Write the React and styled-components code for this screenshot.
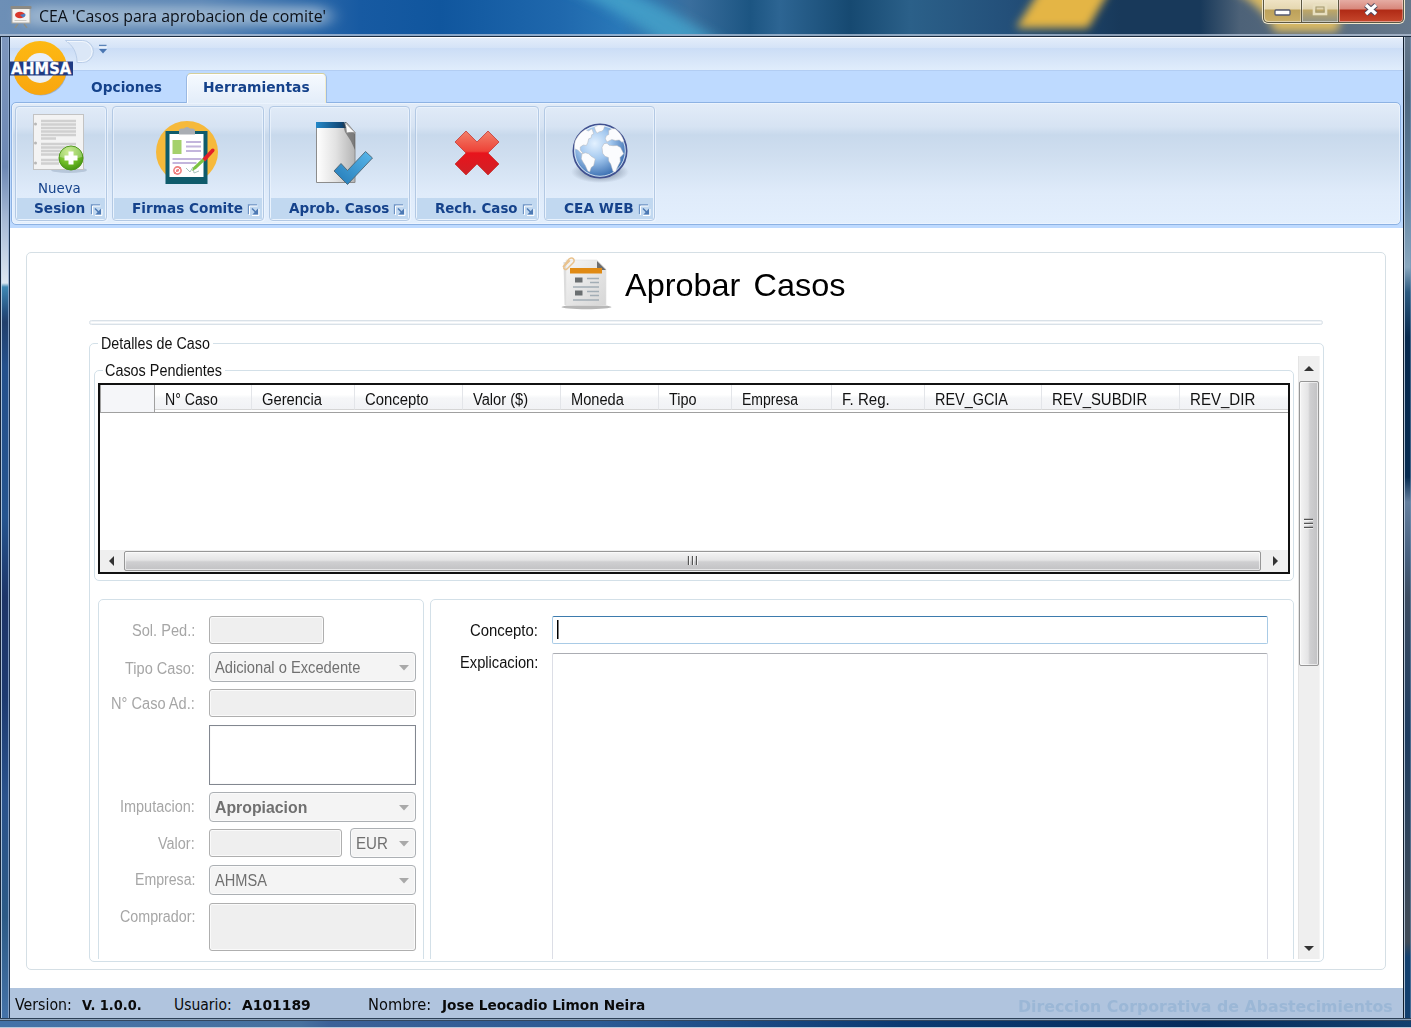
import React, { useLayoutEffect, useRef, useState } from 'react';
import styled, { createGlobalStyle, css } from 'styled-components';

const SANS = '"Liberation Sans", Arial, sans-serif';
const TAHOMA = '"DejaVu Sans Condensed", Tahoma, sans-serif';
const VERDANA = '"DejaVu Sans", Verdana, sans-serif';

const Global = createGlobalStyle`
  * { box-sizing: border-box; }
  body { margin: 0; background: #1b3d66; font-family: ${SANS}; color: #111; }
`;

/* ---------- text fitted to a column width ---------- */
const FitBox = styled.span`
  display: inline-block;
  flex: none;
  width: ${p => p.$w}px;
  height: ${p => p.$lh}px;
  white-space: nowrap;
  text-align: left;
  line-height: ${p => p.$lh + 2 * p.$dy}px;
  font-family: ${p => p.$font};
  font-size: ${p => p.$size}px;
  font-weight: ${p => (p.$bold ? 700 : 400)};
  word-spacing: ${p => p.$ws}px;
  color: ${p => p.$color};
`;
const FitInner = styled.span`
  display: inline-block;
  transform-origin: left center;
`;
function Txt({ w, size = 16, lh = 18, dy = 1, ws = 0, font = SANS, bold, color = 'inherit', children }) {
  const ref = useRef(null);
  const [k, setK] = useState(1);
  useLayoutEffect(() => {
    setK(w / ref.current.offsetWidth);
  }, [w]);
  return (
    <FitBox $w={w} $lh={lh} $dy={dy} $ws={ws} $size={size} $font={font} $bold={bold} $color={color}>
      <FitInner ref={ref} style={{ transform: `scaleX(${k})` }}>{children}</FitInner>
    </FitBox>
  );
}

/* ---------- window frame ---------- */
const Desktop = styled.div`
  width: 1411px;
  height: 1028px;
  overflow: hidden;
  display: grid;
  grid-template-columns: 10px 1393px 8px;
  grid-template-rows: 37px 981px 10px;
`;
const TitleBar = styled.header`
  grid-column: 1 / 4;
  position: relative;
  overflow: hidden;
  display: flex;
  justify-content: space-between;
  align-items: flex-start;
  border-bottom: 1px solid #1c2c40;
  box-shadow: inset 0 -2px 0 rgba(180, 195, 215, 0.75);
  background: linear-gradient(90deg, #6d8fb6 0, #5b86b5 200px, #175aa2 360px, #10569e 440px, #1f68ad 560px, #2a78b8 620px, #3a6e9d 690px, #1c5582 750px, #2d6593 780px, #164971 850px, #2b6089 910px, #234f79 1010px, #18395a 1120px, #18395a 1200px, #4d6278 1240px, #65778a 1411px);
`;
const Wallpaper = styled.svg`
  position: absolute;
  left: 0;
  top: 0;
`;
const Caption = styled.div`
  position: relative;
  display: flex;
  align-items: center;
  gap: 7px;
  padding: 3px 0 0 10px;
  height: 29px;
`;
const CaptionText = styled.div`
  padding-top: 1px;
  height: 24px;
`;
const Buttons = styled.div`
  position: relative;
  display: flex;
  width: 143px;
  height: 24px;
  margin-right: 6px;
  border: 1px solid #efe7cd;
  border-top: 0;
  border-radius: 0 0 6px 6px;
  overflow: hidden;
`;
const WinButton = styled.div`
  width: ${p => p.$w}px;
  display: flex;
  justify-content: center;
  padding-top: ${p => p.$pt || 0}px;
  border: 1px solid #5c5742;
  border-top: 0;
  border-left-width: ${p => (p.$first ? 1 : 0)}px;
  box-shadow: inset 1px -1px 0 rgba(255, 255, 255, 0.45), inset -1px 0 0 rgba(255, 255, 255, 0.35);
  border-radius: ${p => (p.$first ? '0 0 0 5px' : p.$last ? '0 0 5px 0' : 0)};
  background: ${p => p.$bg};
`;
const Edge = styled.div`
  background: ${p => p.$bg};
  ${p => p.$side === 'left' && css`
    border-left: 1px solid #16243a;
    border-right: 1px solid #1d3350;
    box-shadow: inset 1px 0 0 rgba(200, 220, 240, 0.8), inset -1px 0 0 rgba(150, 175, 210, 0.8);
  `}
  ${p => p.$side === 'right' && css`
    border-left: 1px solid #111d2c;
    box-shadow: inset 1px 0 0 rgba(190, 205, 222, 0.9), inset -1px 0 0 rgba(120, 150, 185, 0.5);
  `}
  ${p => p.$side === 'bottom' && css`
    grid-column: 1 / 4;
    border-top: 1px solid #2b3f56;
    border-bottom: 1px solid #b8c9dc;
    box-shadow: inset 0 1px 0 #8fa5bd, inset 0 2px 0 #33475f;
  `}
`;
const Client = styled.div`
  display: flex;
  flex-direction: column;
  background: #fff;
  overflow: hidden;
  position: relative;
`;

/* ---------- ribbon ---------- */
const QuickBar = styled.div`
  flex: none;
  height: 34px;
  border-top: 1px solid #fff;
  border-bottom: 1px solid #b2cdf3;
  background: linear-gradient(#e3edfa 0, #d4e3f7 10px, #cbddf6 10px, #d5e4f8 20px, #e0edfc 32px);
  display: flex;
  padding: 1px 0 0 53px;
`;
const TabRow = styled.nav`
  flex: none;
  height: 31px;
  background: #bedaff;
  display: flex;
  align-items: flex-end;
  padding-left: 57px;
`;
const Tab = styled.div`
  width: ${p => p.$w}px;
  height: 30px;
  padding: ${p => (p.$active ? 4 : 6)}px 0 0 ${p => p.$pl}px;
  position: relative;
  z-index: 1;
  ${p => p.$active && css`
    margin-bottom: -1px;
    border: 1px solid #9bb9e2;
    border-top-color: #d4cf9c;
    border-bottom: 0;
    border-radius: 5px 5px 0 0;
    background: linear-gradient(#f6faff, #e3edf9);
    box-shadow: inset 1px 1px 0 #fff, inset -1px 0 0 #f2eccb;
  `}
`;
const Ribbon = styled.div`
  flex: none;
  height: 123px;
  margin: 0 2px 0 1px;
  padding: 3px;
  display: flex;
  gap: 5px;
  border: 1px solid #8db2e3;
  border-radius: 5px;
  box-shadow: inset 0 0 0 1px rgba(240, 247, 255, 0.7), 0 1px 0 2px #bedaff;
  background: linear-gradient(#e2ecf8 0, #d6e3f3 24px, #c8d9ec 32px, #d0dff0 55px, #dfebfa 90px, #e3effd 122px);
`;
const RibbonBack = styled.div`
  flex: none;
  background: #bedaff;
  height: 126px;
`;
const Group = styled.section`
  width: ${p => p.$w}px;
  height: 115px;
  border: 1px solid #b3c9e4;
  border-radius: 4px;
  box-shadow: inset 0 0 0 1px rgba(236, 244, 254, 0.75), 1px 1px 0 rgba(240, 247, 255, 0.7);
  display: flex;
  flex-direction: column;
`;
const GroupBody = styled.div`
  height: 91px;
  display: flex;
  flex-direction: column;
  align-items: center;
  justify-content: center;
  gap: 4px;
  padding-top: ${p => p.$top || 0}px;
  padding-left: ${p => Math.max(0, p.$shift || 0)}px;
  padding-right: ${p => Math.max(0, -(p.$shift || 0))}px;
`;
const GroupLabel = styled.div`
  flex: 1;
  margin: 0 1px 1px;
  padding: 0 2px 1px ${p => p.$pl || 18}px;
  display: flex;
  align-items: center;
  justify-content: space-between;
  background: #c1d8f0;

  svg { position: relative; top: 1px; }
`;

/* ---------- document ---------- */
const Page = styled.main`
  flex: 1;
  padding: 24px 0 0 16px;
`;
const Sheet = styled.div`
  width: 1360px;
  height: 718px;
  border: 1px solid #d5dfe5;
  border-radius: 5px;
  padding-left: 62px;
`;
const Heading = styled.h1`
  margin: 0;
  font-weight: 400;
  color: #000;
  height: 67px;
  padding: 4px 0 9px 472px;
  display: flex;
  align-items: center;
  gap: 13px;
`;
const Rule = styled.div`
  width: 1234px;
  height: 5px;
  border: 1px solid #d9e1e8;
  border-radius: 3px;
  box-shadow: inset 0 0 0 1px #f0f3f6;
`;
const Frame = styled.fieldset`
  margin: ${p => p.$mt || 0}px 0 0;
  padding: ${p => p.$pad};
  width: ${p => p.$w}px;
  height: ${p => p.$h}px;
  min-width: 0;
  flex: none;
  border: 1px solid #d3e0e8;
  border-radius: 5px;
`;
const Legend = styled.legend`
  margin-left: ${p => p.$ml}px;
  padding: 0 3px 0 ${p => p.$pl}px;
  height: 18px;
`;
const Scroller = styled.div`
  height: 603px;
  display: flex;
  gap: 4px;
  overflow: hidden;
`;
const Column = styled.div`
  width: 1200px;
  flex: none;
  padding-top: 5px;
  overflow: hidden;
`;
const Grid = styled.div`
  width: 1192px;
  height: 191px;
  border: 2px solid #111;
  display: flex;
  flex-direction: column;
  justify-content: space-between;
`;
const HeadRow = styled.div`
  height: 28px;
  display: flex;
  border-bottom: 1px solid #a0a0a0;
`;
const HeadCell = styled.div`
  width: ${p => p.$w}px;
  flex: ${p => (p.$last ? 1 : 'none')};
  height: 25px;
  padding: 5px 0 0 10px;
  background: linear-gradient(#fff 40%, #f5f6f8 55%, #f1f2f5);
  border-bottom: 1px solid #d5d5d5;
  border-right: ${p => (p.$last ? 0 : 1)}px solid #e3e5e9;
`;
const Corner = styled.div`
  width: 55px;
  height: 27px;
  flex: none;
  background: #f5f6f9;
  border-right: 1px solid #a0a0a0;
  border-left: 1px solid #a0a0a0;
`;
const HBar = styled.div`
  height: 22px;
  display: flex;
  align-items: center;
  background: #efefef;
`;
const VBar = styled.div`
  width: 22px;
  flex: none;
  display: flex;
  flex-direction: column;
  align-items: center;
  background: #efefef;
  border-left: 1px solid #e4e4e4;
  border-right: 1px solid #f5f5f5;
`;
const Arrow = styled.div`
  flex: none;
  width: ${p => p.$w}px;
  height: ${p => p.$h}px;
  display: flex;
  align-items: center;
  justify-content: center;
`;
const Thumb = styled.div`
  flex: none;
  display: flex;
  align-items: center;
  justify-content: center;
  border: 1px solid #979797;
  border-radius: 2px;
  box-shadow: inset 0 0 0 1px rgba(255, 255, 255, 0.6);
  ${p => p.$vertical
    ? css`width: 20px; height: 285px; background: linear-gradient(90deg, #f4f4f4, #e4e4e5 45%, #cfcfd1 55%, #c2c2c4);`
    : css`width: 1137px; height: 20px; background: linear-gradient(#f4f4f4, #e4e4e5 45%, #cfcfd1 55%, #c2c2c4);`}
`;
const Panels = styled.div`
  display: flex;
  gap: 6px;
  padding-left: 4px;
  margin-top: 18px;
`;
const Panel = styled.div`
  flex: none;
  width: ${p => p.$w}px;
  height: 390px;
  border: 1px solid #d3e0e8;
  border-radius: 5px;
`;

/* ---------- form ---------- */
const Row = styled.div`
  display: flex;
  margin-top: ${p => p.$mt}px;
  height: ${p => p.$h}px;
`;
const Label = styled.label`
  flex: none;
  width: ${p => p.$w}px;
  margin-right: 14px;
  padding-top: ${p => p.$pt}px;
  text-align: right;
  color: ${p => (p.$active ? '#111' : '#a6a6a6')};
`;
const Field = styled.div`
  flex: none;
  width: ${p => p.$w || 207}px;
  height: ${p => (p.$h ? `${p.$h}px` : '100%')};
  align-self: center;
  border: 1px solid #afafaf;
  border-radius: 3px;
  background: #efefef;
  box-shadow: inset 0 0 0 1px #fafafa;
`;
const Box = styled(Field)`
  border: 1px solid #828790;
  border-radius: 0;
  background: #fff;
`;
const Combo = styled(Field)`
  height: 30px;
  display: flex;
  align-items: center;
  justify-content: space-between;
  padding: 0 5px 0 5px;
  border-color: #acb0b4;
  border-radius: 4px;
  background: #f4f4f4;
  color: #707070;
`;
const Entry = styled.div`
  flex: none;
  width: 716px;
  height: 100%;
  padding: 3px;
  background: #fff;
  border: 1px solid ${p => (p.$focus ? '#a9cbe6' : '#dcdee6')};
  border-top-color: ${p => (p.$focus ? '#3d7bad' : '#abadb3')};
  border-radius: 2px;
`;
const Caret = styled.div`
  width: 1px;
  height: 19px;
  margin-left: 1px;
  background: #000;
  box-shadow: 0.5px 0 0 #000;
`;

/* ---------- status bar ---------- */
const Status = styled.footer`
  flex: none;
  height: 30px;
  padding: 2px 10px 0 5px;
  display: flex;
  align-items: center;
  background: #b0c4de;
  color: #0a0a0a;
`;
const Gap = styled.div`
  flex: ${p => (p.$w ? 'none' : 1)};
  width: ${p => p.$w || 0}px;
`;
const Watermark = styled.div`
  padding-top: 4px;
`;

const Logo = styled.svg`
  position: absolute;
  left: -1px;
  top: 2px;
  z-index: 2;
`;

/* ---------- drawings ---------- */
const AppIcon = () => (
  <svg width="22" height="24" viewBox="0 0 22 24">
    <path d="M8 20l-3 4M14 20l3 4" stroke="#8d8f86" strokeWidth="1.4" />
    <rect x="2" y="4" width="18" height="15" fill="#f5f3f0" stroke="#a9a7a0" />
    <rect x="0.500" y="2" width="21" height="3" rx="1" fill="#8c8a84" />
    <ellipse cx="10" cy="11" rx="5" ry="3.200" fill="#d9382c" />
    <path d="M10 11l5-1.500a5 3.200 0 0 1-2 4z" fill="#4d7fc2" />
    <path d="M4.500 16.500h12" stroke="#c9c7c2" />
  </svg>
);
const AhmsaLogo = () => (
  <Logo width="68" height="62" viewBox="0 0 68 62">
    <defs>
      <linearGradient id="ring" x1="0" y1="0" x2="0" y2="1"><stop offset="0" stopColor="#fdb913" /><stop offset="1" stopColor="#f9a60f" /></linearGradient>
    </defs>
    <circle cx="32" cy="30.500" r="26" fill="rgba(70,80,100,.3)" />
    <circle cx="31" cy="29" r="27" fill="url(#ring)" />
    <circle cx="31" cy="29" r="15" fill="#e9eff8" />
    <rect x="1" y="22.500" width="63" height="14" fill="#1f3b83" />
    <text x="2" y="35" textLength="60" lengthAdjust="spacingAndGlyphs" fontFamily="DejaVu Sans" fontWeight="700" fontSize="15" fill="#fff" stroke="#fff" strokeWidth=".3">AHMSA</text>
  </Logo>
);
const QuickEnd = () => (
  <svg width="46" height="28" viewBox="0 0 46 28">
    <path d="M2.500 1.500h17a11 11 0 0 1 0 22h-5.500c0-10-4-17-11.500-22z" fill="#dbe7f7" stroke="#b9cde8" />
    <path d="M4 2.500h15a10 10 0 0 1 0 20h-4" fill="none" stroke="#f2f7fd" />
    <path d="M36 6.500h7.500" stroke="#5c84b8" strokeWidth="1.500" />
    <path d="M36 10h8l-4 4.500z" fill="#4a76b2" />
    <path d="M36 8h8" stroke="#fff" />
  </svg>
);
const Launcher = () => (
  <svg width="13" height="13" viewBox="0 0 13 13">
    <path d="M1.500 11V2h8.500" fill="none" stroke="#6d93c4" strokeWidth="1.300" />
    <path d="M2.500 12V3h8" fill="none" stroke="#fff" />
    <path d="M5 5.500l5 5" stroke="#4d79b3" strokeWidth="1.500" />
    <path d="M11 5.500v6H5.500z" fill="#4d79b3" />
    <path d="M12 6v6.500H5" fill="none" stroke="#fff" />
  </svg>
);
const NewSession = () => (
  <svg width="56" height="62" viewBox="0 0 56 62">
    <defs>
      <radialGradient id="plus" cx=".4" cy=".25" r=".8"><stop offset="0" stopColor="#b9e36a" /><stop offset=".6" stopColor="#6dbb24" /><stop offset="1" stopColor="#438f12" /></radialGradient>
    </defs>
    <ellipse cx="38" cy="58" rx="18" ry="3" fill="rgba(90,110,140,.25)" />
    <rect x="2.500" y="2.500" width="50" height="55" fill="#f3f3f3" stroke="#c3c3c3" />
    <g stroke="#d0d0d0" strokeWidth="2.400">
      <path d="M10 9h35M10 12.500h35M10 16h35M10 19.500h35M10 23h35M10 26.500h15M10 32h35M10 35.500h35M10 39h25M10 42.500h20M10 48h18M10 51.500h18" />
    </g>
    <g fill="#b8b8b8"><circle cx="4.500" cy="12" r="1.500" /><circle cx="4.500" cy="31" r="1.500" /><circle cx="4.500" cy="51" r="1.500" /></g>
    <circle cx="40" cy="46" r="12" fill="url(#plus)" stroke="#4c9618" />
    <path d="M28.800 45a11.200 10.500 0 0 1 22.400 0q-11 3-22.400 0z" fill="rgba(255,255,255,.3)" />
    <path d="M40 39.500v13M33.500 46h13" stroke="#fff" strokeWidth="5" strokeLinejoin="round" />
  </svg>
);
const Clipboard = () => (
  <svg width="64" height="66" viewBox="0 0 64 66">
    <circle cx="32" cy="32" r="31" fill="#f6b93b" />
    <rect x="10.500" y="11" width="42" height="53" fill="#0f5b6b" />
    <rect x="14.500" y="14" width="34" height="43" fill="#fff" />
    <path d="M24 14.500v-4q0-2 3-2h2q1-1.500 3-1.500t3 1.500h2q3 0 3 2v4z" fill="#a9adb3" />
    <rect x="17.500" y="20" width="9" height="14" fill="#a5d16b" />
    <path d="M31 22h15M31 26.500h15M31 31h15M17.500 39h29M17.500 43h24" stroke="#c3b5dc" strokeWidth="1.800" />
    <circle cx="22.500" cy="50.500" r="3.600" fill="none" stroke="#ee8080" strokeWidth="1.600" />
    <circle cx="22.500" cy="50.500" r="1.300" fill="#e86060" />
    <path d="M19 54l7-7" stroke="#ee8080" />
    <path d="M31 48l4 4 3-5 1 6 5-2" fill="none" stroke="#a8c4bd" />
    <path d="M48 38l-9.500 9-1.500 4 4-2 9-8.500z" fill="#7cc242" />
    <path d="M47.500 38.500l9-9.500q1.500-1.200 2.600 0t0 2.500l-9 10z" fill="#e3202a" />
  </svg>
);
const ApproveDoc = () => (
  <svg width="60" height="68" viewBox="0 0 60 68">
    <defs>
      <linearGradient id="sheet"><stop offset="0" stopColor="#fff" /><stop offset=".5" stopColor="#e2e2e2" /><stop offset="1" stopColor="#b4b4b4" /></linearGradient>
      <linearGradient id="tick" x1="0" y1="1" x2="1" y2="0"><stop offset="0" stopColor="#2278b5" /><stop offset="1" stopColor="#59b8ec" /></linearGradient>
      <linearGradient id="sheetTop"><stop offset="0" stopColor="#2488c8" /><stop offset="1" stopColor="#0b3a66" /></linearGradient>
    </defs>
    <path d="M2.500 3.500h30l8.500 10v50h-38.500z" fill="url(#sheet)" stroke="#8c8c8c" />
    <path d="M2 3h30v6H2z" fill="url(#sheetTop)" />
    <path d="M28 3q7 6 13 12v16q-4-10-10-18z" fill="#3d3d3d" opacity=".5" />
    <path d="M30.500 3l10.500 10.500q-5-.5-8.500.5 0-6-2-11z" fill="#fdfdfd" stroke="#8b8b8b" strokeWidth=".7" />
    <path d="M20 52l7-7.500 6.500 7 18-19 7 6.500-25 26.500z" fill="url(#tick)" stroke="#4c6474" strokeWidth=".9" strokeLinejoin="round" />
  </svg>
);
const RejectMark = () => (
  <svg width="46" height="46" viewBox="0 0 46 46">
    <defs><linearGradient id="cross" x1="0" y1="0" x2="0" y2="1"><stop offset="0" stopColor="#f2806a" /><stop offset=".46" stopColor="#ee4338" /><stop offset=".5" stopColor="#e8141c" /><stop offset="1" stopColor="#cf2127" /></linearGradient></defs>
    <path d="M12 1L23 12 34 1 45 12 34 23 45 34 34 45 23 34 12 45 1 34 12 23 1 12z" fill="url(#cross)" stroke="#c33a35" strokeWidth=".8" />
  </svg>
);
const Globe = () => (
  <svg width="60" height="62" viewBox="0 0 60 62">
    <defs>
      <radialGradient id="sea" cx=".4" cy=".36" r=".66"><stop offset="0" stopColor="#e3f1ff" /><stop offset=".45" stopColor="#a3c8ef" /><stop offset="1" stopColor="#3469ad" /></radialGradient>
      <radialGradient id="shade"><stop offset="0" stopColor="rgba(60,75,100,.75)" /><stop offset="1" stopColor="rgba(60,75,100,0)" /></radialGradient>
    </defs>
    <ellipse cx="30" cy="50" rx="29" ry="11" fill="url(#shade)" />
    <circle cx="30" cy="29" r="26.700" fill="url(#sea)" stroke="#41508f" strokeWidth="1.600" />
    <g fill="#fbfcfe" stroke="#b2b4ba" strokeWidth=".5">
      <path d="M5.300 18.500Q9 11 15.300 7.500l3 1.500 3.700-2.200 1.700 5-2 1-.5 3-2.500 1-1 4-1.400 2.700-3-.5-3 2 0 3 2.500 3-1.500.5-3.500-3.500-3-1.200q-1-4.500 .5-8.300z" />
      <path d="M12 31.800l3.500-1 3.200 1 2.500 2.500 4.100 2.500-1.600 6.700-2.500 2-1.500 4.500-2-1-2.400-5.500-2-3-2-3.700z" />
      <path d="M24.300 5.200l4-1.700 6.400.3-1 3.500-1.700 1.900-2.500.5-2.500 1.500-1.500-2.500z" />
      <path d="M35.300 16.800l1-3 2.400-1.300v-4l3.300-1.800 3.300.1q6 4.500 8.400 11.700l-1.500 2-3-2.500-3.900.5-3.500-1-4.800 2.500z" />
      <path d="M32 25.200l2-3.500 3-.5 2 2 4 .5 4-.2 3.500 2 3.200 6.300-3.700 3.700 .3 4-2 4-3 6.500-2.300-.5-2.300-7.500-2-3-.3-3.500-3.400-1.200-2.300-3z" />
    </g>
    <circle cx="30" cy="29" r="25.300" fill="none" stroke="rgba(255,255,255,.75)" strokeWidth="1" />
  </svg>
);
const ReportIcon = () => (
  <svg width="51" height="54" viewBox="0 0 51 54">
    <defs><linearGradient id="rep" x1="0" y1="0" x2="1" y2="1"><stop offset="0" stopColor="#f5f5f5" /><stop offset="1" stopColor="#d6d6d6" /></linearGradient></defs>
    <ellipse cx="25.500" cy="50" rx="25" ry="2.200" fill="#b7b7b7" />
    <path d="M2.500 5h35v43h-34z" fill="#dcdcdc" />
    <path d="M5 3h31l9 9v36.500H5z" fill="url(#rep)" stroke="#e0e0e0" strokeWidth=".6" />
    <path d="M36 4v9h9z" fill="#6d6d6d" />
    <rect x="9" y="11" width="32" height="5.500" fill="#e08a14" />
    <path d="M2 10l6-8q3-2 4.500 0t-.5 4L6 12q-2 1-3-.500t1-3l5-5" fill="none" stroke="#e9c28d" strokeWidth="1.500" />
    <g fill="#6a6e70"><rect x="14" y="20.500" width="7.500" height="5" /><rect x="14" y="33.500" width="7.500" height="5" /></g>
    <g stroke="#a2adb5" strokeWidth="1.700"><path d="M26 21.500h12M29 25.500h9M12 30h26M26 34.500h12M29 38.500h9M12 43h26" /></g>
  </svg>
);
const DropArrow = () => <svg width="12" height="7" viewBox="0 0 12 7"><path d="M1 1h10L6 6.500z" fill="#a9a9a9" /></svg>;
const ARROWS = { left: 'M8 1v10L3 6z', right: 'M4 1v10l5-5z', up: 'M1 8h10L6 3z', down: 'M1 4h10L6 9z' };
const BarArrow = ({ dir }) => <svg width="12" height="12" viewBox="0 0 12 12"><path d={ARROWS[dir]} fill="#333" /></svg>;
const Grip = ({ vertical }) => (
  <svg width="12" height="12" viewBox="0 0 12 12">
    <path d={vertical ? 'M1 1.500h9M1 5.500h9M1 9.500h9' : 'M1.500 1v9M5.500 1v9M9.500 1v9'} stroke="#555" strokeWidth="1.300" />
    <path d={vertical ? 'M1 2.500h9M1 6.500h9M1 10.500h9' : 'M2.500 1v9M6.500 1v9M10.500 1v9'} stroke="#fff" strokeWidth=".8" />
  </svg>
);

/* ---------- data ---------- */
const COLUMNS = [
  ['N° Caso', 97, 53], ['Gerencia', 103, 60], ['Concepto', 108, 64], ['Valor ($)', 98, 55], ['Moneda', 98, 53],
  ['Tipo', 73, 28], ['Empresa', 100, 56], ['F. Reg.', 93, 48], ['REV_GCIA', 117, 73], ['REV_SUBDIR', 138, 95], ['REV_DIR', 108, 65],
];
const GROUPS = [
  { label: 'Sesion', w: 92, tw: 51, pl: 17, caption: 'Nueva', icon: <NewSession />, shift: -4, top: 2 },
  { label: 'Firmas Comite', w: 152, tw: 111, icon: <Clipboard />, shift: -2 },
  { label: 'Aprob. Casos', w: 141, tw: 100, icon: <ApproveDoc />, shift: 8 },
  { label: 'Rech. Caso', w: 124, tw: 83, icon: <RejectMark /> },
  { label: 'CEA WEB', w: 111, tw: 70, icon: <Globe /> },
];
const Blue = ({ w, children }) => <Txt w={w} size={14.5} dy={0} font={VERDANA} bold color="#15428b">{children}</Txt>;

export default function App() {
  return (
    <Desktop>
      <Global />
      <TitleBar>
        <Wallpaper width="1411" height="34" viewBox="0 0 1411 34">
          <defs>
            <filter id="soft" x="-20%" y="-80%" width="140%" height="260%"><feGaussianBlur stdDeviation="4" /></filter>
            <filter id="softer" x="-20%" y="-80%" width="140%" height="260%"><feGaussianBlur stdDeviation="9 5" /></filter>
          </defs>
          <rect x="22" y="6" width="308" height="20" rx="10" fill="#a9c0d6" opacity=".75" filter="url(#softer)" />
          <path d="M560-14h50q60 20 110 56h-60q-40-32-100-56z" fill="#45a3cb" opacity=".85" filter="url(#softer)" />
          <path d="M1040-10h70l-22 38h-72z" fill="#e4b544" filter="url(#soft)" />
          <path d="M1232-10h120l-15 42h-62q-10-24-43-42z" fill="#d9b964" filter="url(#soft)" />
        </Wallpaper>
        <Caption>
          <AppIcon />
          <CaptionText><Txt w={287} size={16} lh={22} dy={0} font={'"Open Sans", "Segoe UI", sans-serif'} color="#0b1018">CEA 'Casos para aprobacion de comite'</Txt></CaptionText>
        </Caption>
        <Buttons>
          <WinButton $w={39} $first $pt={9} $bg="linear-gradient(#efe3c4 0, #e5d7b0 9px, #bda15a 10px, #cbb06a 23px)">
            <svg width="18" height="8"><rect x="1" y="1" width="15" height="5" rx="1" fill="#fff" stroke="#545a72" strokeWidth="1.300" /></svg>
          </WinButton>
          <WinButton $w={37} $pt={3} $bg="linear-gradient(#efe6cc 0, #dfd3b0 9px, #bfa766 10px, #8d9188 23px)">
            <svg width="18" height="14"><rect x="3" y="2" width="12" height="9" fill="none" stroke="#e8dfc0" strokeWidth="2.600" /><rect x="5" y="4" width="8" height="5" fill="none" stroke="#a39a70" /></svg>
          </WinButton>
          <WinButton $w={65} $last $pt={2} $bg="linear-gradient(#e5aca3 0, #d8877b 9px, #b02a15 10px, #c8492e 23px)">
            <svg width="18" height="15" viewBox="0 0 18 15"><path d="M4 3l10 9M14 3L4 12" stroke="#4e4a5e" strokeWidth="5.500" /><path d="M4 3l10 9M14 3L4 12" stroke="#fff" strokeWidth="3.400" /></svg>
          </WinButton>
        </Buttons>
      </TitleBar>

      <Edge $side="left" $bg="linear-gradient(#7d96bd 0, #6d88b4 130px, #a5b8d4 180px, #dce7f2 246px, #3f88b4 250px, #26507f 275px, #22406c 285px, #24508c 330px, #25548f 480px, #1d3568 560px, #1d3a70 660px, #2a528c 760px, #2c5a86 880px, #4472a8 981px)" />
      <Client>
        <AhmsaLogo />
        <QuickBar><QuickEnd /></QuickBar>
        <TabRow>
          <Tab $w={119} $pl={24}><Blue w={71}>Opciones</Blue></Tab>
          <Tab $w={141} $pl={16} $active><Blue w={107}>Herramientas</Blue></Tab>
        </TabRow>
        <RibbonBack>
          <Ribbon>
            {GROUPS.map(g => (
              <Group key={g.label} $w={g.w}>
                <GroupBody $shift={g.shift} $top={g.top}>
                  {g.icon}
                  {g.caption && <Txt w={43} size={14.5} font={TAHOMA} color="#15428b">{g.caption}</Txt>}
                </GroupBody>
                <GroupLabel $pl={g.pl}><Blue w={g.tw}>{g.label}</Blue><Launcher /></GroupLabel>
              </Group>
            ))}
          </Ribbon>
        </RibbonBack>

        <Page>
          <Sheet>
            <Heading><ReportIcon /><Txt w={220} size={32} lh={40} ws={4}>Aprobar Casos</Txt></Heading>
            <Rule />
            <Frame $w={1235} $h={628} $mt={9} $pad="4px 0 2px 4px">
              <Legend $ml={4} $pl={3}><Txt w={109}>Detalles de Caso</Txt></Legend>
              <Scroller>
                <Column>
                  <Frame $w={1200} $h={220} $pad="4px 3px">
                    <Legend $ml={5} $pl={2}><Txt w={117}>Casos Pendientes</Txt></Legend>
                    <Grid>
                      <HeadRow>
                        <Corner />
                        {COLUMNS.map(([name, w, tw], i) => (
                          <HeadCell key={name} $w={w} $last={i === COLUMNS.length - 1}><Txt w={tw}>{name}</Txt></HeadCell>
                        ))}
                      </HeadRow>
                      <HBar>
                        <Arrow $w={24} $h={20}><BarArrow dir="left" /></Arrow>
                        <Thumb><Grip /></Thumb>
                        <Arrow $w={27} $h={20}><BarArrow dir="right" /></Arrow>
                      </HBar>
                    </Grid>
                  </Frame>
                  <Panels>
                    <Panel $w={326}>
                      <Row $mt={16} $h={28}><Label $w={96} $pt={5}><Txt w={63}>Sol. Ped.:</Txt></Label><Field $w={115} /></Row>
                      <Row $mt={8} $h={30}><Label $w={96} $pt={7}><Txt w={70}>Tipo Caso:</Txt></Label><Combo><Txt w={145}>Adicional o Excedente</Txt><DropArrow /></Combo></Row>
                      <Row $mt={7} $h={28}><Label $w={96} $pt={5}><Txt w={84}>N° Caso Ad.:</Txt></Label><Field /></Row>
                      <Row $mt={8} $h={60}><Label $w={96} /><Box /></Row>
                      <Row $mt={7} $h={30}><Label $w={96} $pt={5}><Txt w={75}>Imputacion:</Txt></Label><Combo><Txt w={92} bold>Apropiacion</Txt><DropArrow /></Combo></Row>
                      <Row $mt={6} $h={30}><Label $w={96} $pt={6}><Txt w={37}>Valor:</Txt></Label><Field $w={133} $h={28} /><Gap $w={8} /><Combo $w={66}><Txt w={32} size={17}>EUR</Txt><DropArrow /></Combo></Row>
                      <Row $mt={7} $h={30}><Label $w={96} $pt={5}><Txt w={60}>Empresa:</Txt></Label><Combo><Txt w={52}>AHMSA</Txt><DropArrow /></Combo></Row>
                      <Row $mt={8} $h={48}><Label $w={96} $pt={4}><Txt w={75}>Comprador:</Txt></Label><Field /></Row>
                    </Panel>
                    <Panel $w={864}>
                      <Row $mt={16} $h={28}><Label $active $w={107} $pt={5}><Txt w={68}>Concepto:</Txt></Label><Entry $focus><Caret /></Entry></Row>
                      <Row $mt={9} $h={330}><Label $active $w={107} $pt={0}><Txt w={78}>Explicacion:</Txt></Label><Entry /></Row>
                    </Panel>
                  </Panels>
                </Column>
                <VBar>
                  <Arrow $w={20} $h={25}><BarArrow dir="up" /></Arrow>
                  <Thumb $vertical><Grip vertical /></Thumb>
                  <Gap />
                  <Arrow $w={20} $h={22}><BarArrow dir="down" /></Arrow>
                </VBar>
              </Scroller>
            </Frame>
          </Sheet>
        </Page>

        <Status>
          <Txt w={57} size={15.5} font={TAHOMA}>Version:</Txt><Gap $w={10} />
          <Txt w={60} size={14.5} font={VERDANA} bold>V. 1.0.0.</Txt><Gap $w={32} />
          <Txt w={58} size={15.5} font={TAHOMA}>Usuario:</Txt><Gap $w={10} />
          <Txt w={69} size={14.5} font={VERDANA} bold>A101189</Txt><Gap $w={57} />
          <Txt w={63} size={15.5} font={TAHOMA}>Nombre:</Txt><Gap $w={11} />
          <Txt w={203} size={14.5} font={VERDANA} bold>Jose Leocadio Limon Neira</Txt>
          <Gap />
          <Watermark><Txt w={375} size={16} font={VERDANA} bold color="#9bb7d6">Direccion Corporativa de Abastecimientos</Txt></Watermark>
        </Status>
      </Client>
      <Edge $side="right" $bg="linear-gradient(#66788b 0, #4e6880 60px, #5e7f9e 150px, #8aa8bf 230px, #2c5a80 255px, #06294e 300px, #052a50 440px, #65809f 465px, #47607f 520px, #3c4c61 560px, #1d3c60 700px, #3f4b58 880px, #3f4b58 905px, #13406f 920px, #13406f 981px)" />
      <Edge $side="bottom" $bg="linear-gradient(90deg, #4472a8 0, #47719f 300px, #3c6198 330px, #2b5a94 600px, #0b3a72 900px, #052c5c 1200px, #13406f 1411px)" />
    </Desktop>
  );
}
